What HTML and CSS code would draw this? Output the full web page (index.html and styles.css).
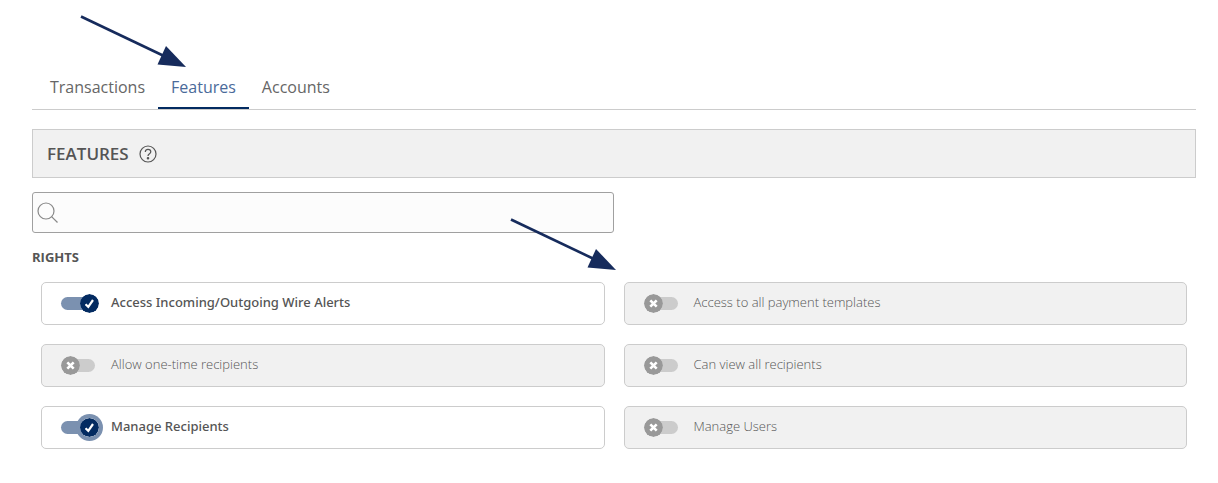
FILE: index.html
```html
<!DOCTYPE html>
<html lang="en">
<head>
    <meta charset="UTF-8">
    <meta name="viewport" content="width=device-width, initial-scale=1.0">
    <title>Features</title>
    <link rel="stylesheet" href="styles.css">
</head>
<body>
    <!-- shared shapes -->
    <svg class="defs" aria-hidden="true">
        <symbol id="arrow" viewBox="0 0 108 54">
            <path d="M1 1.5L84 41" fill="none" stroke="#162b5c" stroke-width="2.6"/>
            <path d="M86 31L106 52L77.500 49.500z" fill="#162b5c"/>
        </symbol>
        <symbol id="on" viewBox="0 0 19 19">
            <circle cx="9.500" cy="9.500" r="9.500" fill="#032b61"/>
            <path d="M5.500 10.200L8.300 12.800L13 6" fill="none" stroke="#fff" stroke-width="2.200"/>
        </symbol>
        <symbol id="off" viewBox="0 0 19 19">
            <circle cx="9.500" cy="9.500" r="9.400" fill="#999"/>
            <path d="M6.300 6.300l6.400 6.400M12.700 6.300l-6.400 6.400" fill="none" stroke="#fff" stroke-width="2.600"/>
        </symbol>
    </svg>

    <div class="page">
        <nav class="tabs">
            <a href="#">Transactions</a>
            <a href="#" class="active">Features</a>
            <a href="#">Accounts</a>
        </nav>

        <div class="title">
            <h1>FEATURES</h1>
            <button type="button" class="help" aria-label="Help">
                <svg viewBox="0 0 18 18" width="18" height="18" fill="none" stroke="#555" stroke-width="1.2">
                    <circle cx="9" cy="9" r="8"/>
                    <path d="M6.300 7C6.300 5.200 7.400 4.400 9 4.400S11.800 5.400 11.800 6.800C11.800 8.700 9 8.800 9 11"/>
                    <circle cx="9" cy="13.300" r=".7" fill="#555"/>
                </svg>
            </button>
        </div>

        <div class="search">
            <svg viewBox="0 0 22 22" width="22" height="22" fill="none" stroke="#888" stroke-width="1.2">
                <circle cx="9" cy="9" r="8"/>
                <path d="M14.600 14.600L20.500 20.500"/>
            </svg>
            <input type="text" aria-label="Search">
        </div>

        <h2>RIGHTS</h2>
        <div class="rights">
            <label class="card on">
                <span class="switch"><input type="checkbox" checked><svg><use href="#on"/></svg></span>
                <span class="name">Access Incoming/Outgoing Wire Alerts</span>
            </label>
            <label class="card">
                <span class="switch"><input type="checkbox"><svg><use href="#off"/></svg></span>
                <span class="name">Access to all payment templates</span>
            </label>
            <label class="card">
                <span class="switch"><input type="checkbox"><svg><use href="#off"/></svg></span>
                <span class="name">Allow one-time recipients</span>
            </label>
            <label class="card">
                <span class="switch"><input type="checkbox"><svg><use href="#off"/></svg></span>
                <span class="name">Can view all recipients</span>
            </label>
            <label class="card on focus">
                <span class="switch"><input type="checkbox" checked><svg><use href="#on"/></svg></span>
                <span class="name">Manage Recipients</span>
            </label>
            <label class="card">
                <span class="switch"><input type="checkbox"><svg><use href="#off"/></svg></span>
                <span class="name">Manage Users</span>
            </label>
        </div>
    </div>

    <svg class="arrow arrow-tab"><use href="#arrow"/></svg>
    <svg class="arrow arrow-card"><use href="#arrow"/></svg>
</body>
</html>
```
FILE: styles.css
```css
* {box-sizing: border-box;}
body, h1, h2 {margin: 0;}
body {
    position: relative;
    font: 14px/20px "Open Sans", "Noto Sans", sans-serif;
    color: #444;
    background: #fff;
}
.defs {
    position: absolute;
    width: 0;
    height: 0;
}
.page {padding: 67px 22px 20px 32px;}

.tabs {
    display: flex;
    padding-left: 5px;
    border-bottom: 1px solid #ccc;
}
.tabs a {
    height: 42px;
    padding: 0 13px;
    font-size: 16px;
    line-height: 40px;
    color: #666;
    text-decoration: none;
    border-bottom: 2px solid transparent;
}
.tabs a.active {
    color: #4a6a9a;
    border-color: #032b61;
}

.title {
    display: flex;
    align-items: center;
    gap: 10px;
    height: 49px;
    margin-top: 19px;
    padding: 0 14px;
    background: #f1f1f1;
    border: 1px solid #ccc;
}
.title h1 {
    font-size: 17px;
    font-weight: 600;
    color: #555;
}
.help {
    display: flex;
    padding: 0;
    border: 0;
    background: none;
}

.search {
    display: flex;
    align-items: center;
    width: 50%;
    height: 41px;
    margin-top: 14px;
    padding: 0 4px;
    background: #fcfcfc;
    border: 1px solid #a0a0a0;
    border-radius: 3px;
}
.search input {
    flex: 1;
    height: 100%;
    padding: 0 8px;
    font: inherit;
    border: 0;
    outline: 0;
    background: none;
}

h2 {
    margin-top: 14px;
    font-size: 13px;
    line-height: 20px;
    font-weight: 700;
    color: #555;
}

.rights {
    display: grid;
    grid-template-columns: 1fr 1fr;
    gap: 19px;
    padding: 15px 9px;
}
.card {
    display: flex;
    align-items: center;
    gap: 12px;
    height: 43px;
    padding: 0 19px;
    background: #f1f1f1;
    border: 1px solid #ccc;
    border-radius: 5px;
}
.card.on {background: #fff;}
.name {
    padding-bottom: 3px;
    font-size: 13px;
    font-weight: 300;
    color: #555;
}
.on .name {
    font-family: "Noto Sans", "Open Sans", sans-serif;
    font-weight: 500;
    color: #555;
}
.switch {
    position: relative;
    display: flex;
    align-items: center;
    width: 38px;
    height: 19px;
}
.switch input {
    appearance: none;
    width: 34px;
    height: 13px;
    margin: 0;
    border-radius: 7px;
    background: #ccc;
}
.on input {background: #7b91b0;}
.switch svg {
    position: absolute;
    top: 0;
    left: 0;
    width: 19px;
    height: 19px;
    border-radius: 50%;
    pointer-events: none;
}
.on .switch svg {
    left: auto;
    right: 0;
}
.focus .switch svg {box-shadow: 0 0 0 4px #7b91b0;}

/* callout arrows */
.arrow {
    position: absolute;
    width: 108px;
    height: 54px;
    pointer-events: none;
}
.arrow-tab {
    top: 15px;
    left: 80px;
}
.arrow-card {
    top: 218px;
    left: 510px;
}
```
